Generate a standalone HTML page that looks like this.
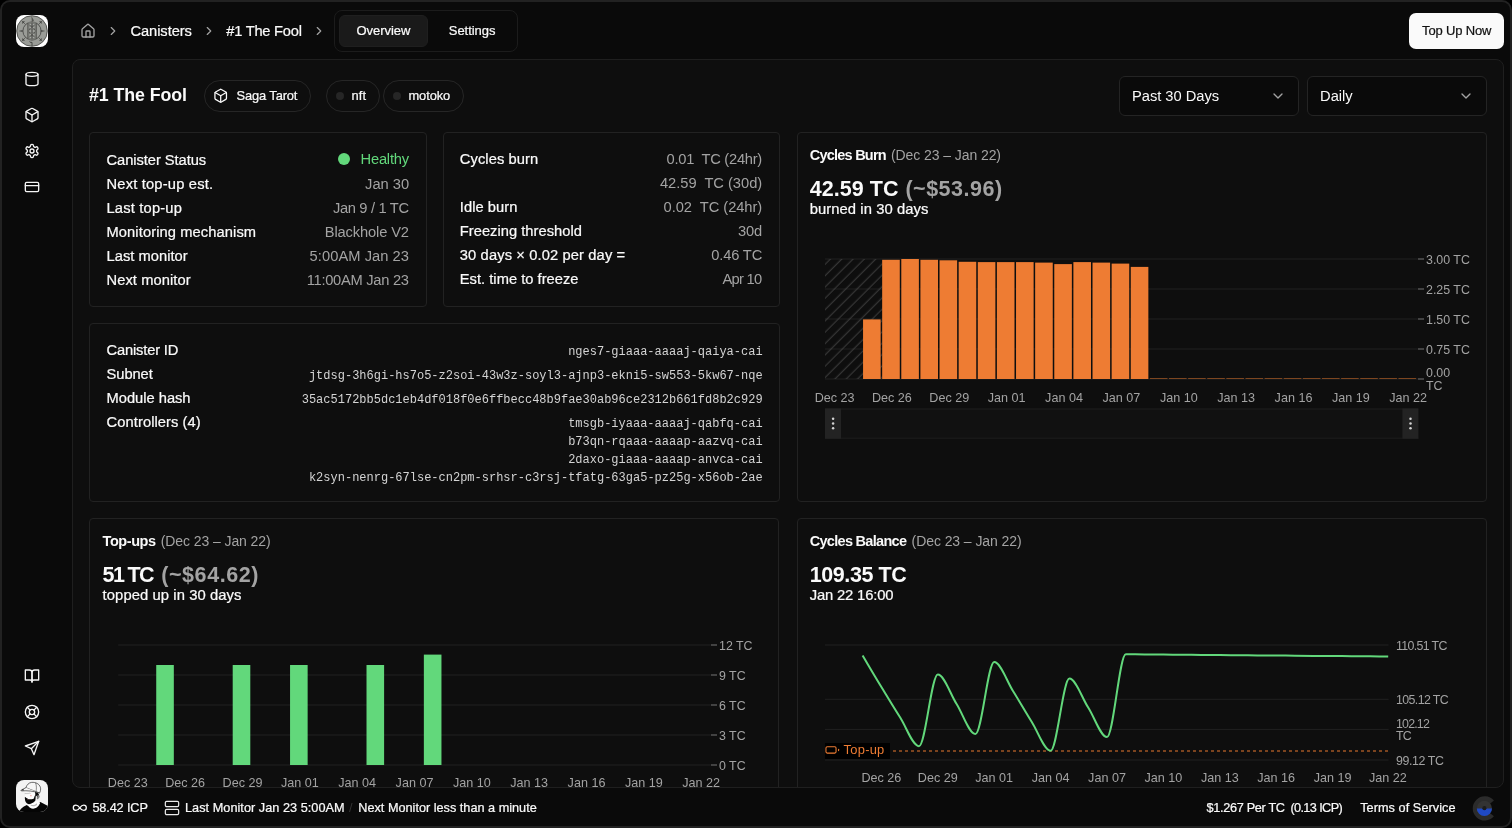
<!DOCTYPE html>
<html><head><meta charset="utf-8"><title>#1 The Fool</title>
<style>
*{box-sizing:border-box;margin:0;padding:0}
html,body{width:1512px;height:828px;overflow:hidden;background:#000}
body{font-family:"Liberation Sans",sans-serif;color:#fafafa;font-size:14.6px;-webkit-font-smoothing:antialiased}
#win{position:absolute;left:0;top:0;width:1512px;height:828px;background:#222;border-radius:10px}
#app{position:absolute;left:2px;top:2px;width:1508px;height:824px;background:#0a0a0a;border-radius:8px;overflow:hidden}
/* everything inside #page is positioned in full-window coordinates */
#page{position:absolute;left:-2px;top:-2px;width:1512px;height:828px;will-change:transform}
.abs{position:absolute}
.ic{position:absolute;display:block}
.t{position:absolute;white-space:pre;line-height:1}
.mut{color:#a3a3a3}
.panel{position:absolute;left:72px;top:59px;width:1432px;height:729px;border:1px solid #1f1f1f;border-radius:8px;background:#0e0e0e;overflow:hidden}
.pin{position:absolute;left:-73px;top:-60px;width:1512px;height:828px}
.card{position:absolute;border:1px solid #222;border-radius:4px;background:#0e0e0e}
.pill{position:absolute;height:32px;top:80px;border:1px solid #262626;border-radius:16px}
.row{position:absolute;left:0;right:0;height:24px}
.mono{font-family:"Liberation Mono",monospace;font-size:12px;color:#d4d4d4}
</style></head><body>
<div id="win"><div id="app"><div id="page">
<svg class="ic" style="left:16px;top:15px" width="32" height="32" viewBox="0 0 32 32">
<defs><clipPath id="lgc"><rect width="32" height="32" rx="8"/></clipPath></defs>
<rect width="32" height="32" rx="8" fill="#fefefe"/>
<g clip-path="url(#lgc)">
<circle cx="16" cy="16" r="15.3" fill="#9a9c97" stroke="#4a4b48" stroke-width=".9"/>
<circle cx="16" cy="16" r="9.1" fill="none" stroke="#4a4b48" stroke-width=".9"/>
<path d="M22.51 9.49L26.32 5.68M9.49 9.49L5.68 5.68M9.49 22.51L5.68 26.32M22.51 22.51L26.32 26.32" stroke="#4a4b48" stroke-width=".7" fill="none"/>
<path d="M25.62 6.38L22.99 6.37L25.63 9.01ZM6.38 6.38L6.37 9.01L9.01 6.37ZM6.38 25.62L9.01 25.63L6.37 22.99ZM25.62 25.62L25.63 22.99L22.99 25.63Z" fill="#3d3e3b"/>
<path d="M15.300 .8L18 5.400L15.900 7Z" fill="#565753"/>
<path d="M16 31.200V27.400h-1.700l-.6-1" stroke="#3d3e3b" stroke-width=".9" fill="none"/>
<path d="M2.500 16l4.200-1v2zM29.500 16l-4.700-1.100v2.200z" fill="#4a4b48"/>
<rect x="11.700" y="7.300" width="8.700" height="17.300" rx=".8" fill="#7b7d78"/>
<path d="M12.600 9l6.800 6.200M19.400 9l-6.800 6.200M12.600 16.800l6.800 6.200M19.400 16.800l-6.800 6.200M16 7.500v17" stroke="#50514e" stroke-width=".9" fill="none"/>
<path d="M11.700 8v16M20.400 8v16" stroke="#4a4b48" stroke-width=".7"/>
<g fill="#a9aba6"><rect x="13.50" y="8.90" width="1.6" height="1.4" rx=".3"/><rect x="16.90" y="8.90" width="1.6" height="1.4" rx=".3"/><ellipse cx="14.30" cy="12.60" rx="1.25" ry=".65" transform="rotate(40 14.30 12.60)"/><ellipse cx="17.70" cy="12.60" rx="1.25" ry=".65" transform="rotate(-40 17.70 12.60)"/><rect x="13.45" y="15.15" width="1.7" height="1.7" rx=".3"/><rect x="16.85" y="15.15" width="1.7" height="1.7" rx=".3"/><ellipse cx="14.30" cy="19.40" rx="1.25" ry=".65" transform="rotate(-40 14.30 19.40)"/><ellipse cx="17.70" cy="19.40" rx="1.25" ry=".65" transform="rotate(40 17.70 19.40)"/><rect x="13.50" y="21.70" width="1.6" height="1.4" rx=".3"/><rect x="16.90" y="21.70" width="1.6" height="1.4" rx=".3"/></g>
</g></svg>
<svg class="ic" style="left:24px;top:71px" width="16" height="16" viewBox="0 0 24 24" fill="none" stroke="#f5f5f5" stroke-width="2" stroke-linecap="round" stroke-linejoin="round"><ellipse cx="12" cy="5" rx="9" ry="3"/><path d="M3 5v14a9 3 0 0 0 18 0V5"/></svg>
<svg class="ic" style="left:24px;top:107px" width="16" height="16" viewBox="0 0 24 24" fill="none" stroke="#f5f5f5" stroke-width="2" stroke-linecap="round" stroke-linejoin="round"><path d="M21 8a2 2 0 0 0-1-1.73l-7-4a2 2 0 0 0-2 0l-7 4A2 2 0 0 0 3 8v8a2 2 0 0 0 1 1.73l7 4a2 2 0 0 0 2 0l7-4A2 2 0 0 0 21 16Z"/><path d="m3.3 7 8.7 5 8.7-5"/><path d="M12 22V12"/></svg>
<svg class="ic" style="left:24px;top:143px" width="16" height="16" viewBox="0 0 24 24" fill="none" stroke="#f5f5f5" stroke-width="2" stroke-linecap="round" stroke-linejoin="round"><path d="M12.22 2h-.44a2 2 0 0 0-2 2v.18a2 2 0 0 1-1 1.73l-.43.25a2 2 0 0 1-2 0l-.15-.08a2 2 0 0 0-2.73.73l-.22.38a2 2 0 0 0 .73 2.73l.15.1a2 2 0 0 1 1 1.72v.51a2 2 0 0 1-1 1.74l-.15.09a2 2 0 0 0-.73 2.73l.22.38a2 2 0 0 0 2.73.73l.15-.08a2 2 0 0 1 2 0l.43.25a2 2 0 0 1 1 1.73V20a2 2 0 0 0 2 2h.44a2 2 0 0 0 2-2v-.18a2 2 0 0 1 1-1.73l.43-.25a2 2 0 0 1 2 0l.15.08a2 2 0 0 0 2.73-.73l.22-.39a2 2 0 0 0-.73-2.73l-.15-.08a2 2 0 0 1-1-1.74v-.5a2 2 0 0 1 1-1.74l.15-.09a2 2 0 0 0 .73-2.73l-.22-.38a2 2 0 0 0-2.73-.73l-.15.08a2 2 0 0 1-2 0l-.43-.25a2 2 0 0 1-1-1.73V4a2 2 0 0 0-2-2z"/><circle cx="12" cy="12" r="3"/></svg>
<svg class="ic" style="left:24px;top:179px" width="16" height="16" viewBox="0 0 24 24" fill="none" stroke="#f5f5f5" stroke-width="2" stroke-linecap="round" stroke-linejoin="round"><rect width="20" height="14" x="2" y="5" rx="2"/><line x1="2" x2="22" y1="10" y2="10"/></svg>
<svg class="ic" style="left:24px;top:667.5px" width="16" height="16" viewBox="0 0 24 24" fill="none" stroke="#f5f5f5" stroke-width="2" stroke-linecap="round" stroke-linejoin="round"><path d="M2 3h6a4 4 0 0 1 4 4v14a3 3 0 0 0-3-3H2z"/><path d="M22 3h-6a4 4 0 0 0-4 4v14a3 3 0 0 1 3-3h7z"/></svg>
<svg class="ic" style="left:24px;top:704px" width="16" height="16" viewBox="0 0 24 24" fill="none" stroke="#f5f5f5" stroke-width="2" stroke-linecap="round" stroke-linejoin="round"><circle cx="12" cy="12" r="10"/><path d="m4.93 4.93 4.24 4.24"/><path d="m14.83 9.17 4.24-4.24"/><path d="m14.83 14.83 4.24 4.24"/><path d="m9.17 14.83-4.24 4.24"/><circle cx="12" cy="12" r="4"/></svg>
<svg class="ic" style="left:24px;top:740px" width="16" height="16" viewBox="0 0 24 24" fill="none" stroke="#f5f5f5" stroke-width="2" stroke-linecap="round" stroke-linejoin="round"><path d="m22 2-7 20-4-9-9-4Z"/><path d="M22 2 11 13"/></svg>
<svg class="ic" style="left:16px;top:780px" width="32" height="32" viewBox="0 0 32 32">
<defs><clipPath id="avc"><rect width="32" height="32" rx="8"/></clipPath></defs>
<g clip-path="url(#avc)"><rect width="32" height="32" fill="#f3f3f3"/>
<path d="M3.300 32C3.800 29.300 6.500 27 10.800 25L14 27.500L24.400 22L32.500 26.200V32Z" fill="#050505"/>
<path d="M12.600 25.200C13.200 29.300 20.500 31 24.100 23.300L22.300 20.500L13.500 23.500Z" fill="#fdfdfd"/>
<path d="M14.500 24.500c2 1 4.500.7 6.300-1.300l.3 1.500c-2 1.800-4.600 2-6.400.9z" fill="#b9b9b9"/>
<path d="M9.600 12.500C9 15 8.800 19.500 10 22.300c2 2.200 6.500 1.700 9.500-1.800l.800-8z" fill="#fcfcfc"/>
<path d="M8.900 16.800C8.700 19.300 9.200 21.600 10.100 22.600C11.500 24.300 13.200 24.500 14.800 23.800C17 23 18.900 21.700 19.400 20.600L19.900 14.600C18.700 15.600 18.200 17.200 18 18.400C16 19.300 13.500 19.500 12.300 19C11 18.400 9.800 17.600 8.900 16.800Z" fill="#060606"/>
<path d="M10.700 19.100c.7.600 1.700.7 2.500.3-.5.900-1.900 1-2.500-.3z" fill="#e9a3a3"/>
<ellipse cx="14.900" cy="15.700" rx="1" ry=".6" fill="#f3b3b0"/>
<path d="M19.100 12.100c1.600.2 3.300 1 3.900 2.600l-1.400 2.700c-.6-1.400-1.400-1.900-2.200-1.900z" fill="#0a0a0a"/>
<path d="M21.300 15.200c1.400-.6 2.200.4 1.900 1.600-.3 1.300-1 2-1.900 2.200z" fill="#9a9a9a" stroke="#222" stroke-width=".4"/>
<path d="M9.900 7.700C10.800 4.800 12.800 2.700 15.600 2.400C19.700 2 23.300 3.900 24.400 7.300C25 9.300 24.300 11.800 23.500 13L9.900 7.700Z" fill="#f6f6f6" stroke="#111" stroke-width=".6" stroke-linejoin="round"/>
<path d="M9.900 7.700L5.300 10C4.800 10.300 5 10.900 5.700 10.900C11 10.400 17 11 23.500 13" fill="#f6f6f6" stroke="#111" stroke-width=".6" stroke-linejoin="round"/>
<path d="M5.100 10.300l2.300-1.200.4 1.500z" fill="#111"/>
<path d="M19.600 2.900c1 2.700 1 5.800.4 8.800" fill="none" stroke="#222" stroke-width=".5"/>
<path d="M8.700 13.600h3.600M12.300 13.600c.8-.5 1.600-.5 2.300 0" fill="none" stroke="#777" stroke-width=".4"/>
</g></svg>
<svg class="ic" style="left:80px;top:23px" width="16" height="16" viewBox="0 0 24 24" fill="none" stroke="#a3a3a3" stroke-width="2" stroke-linecap="round" stroke-linejoin="round"><path d="M15 21v-8a1 1 0 0 0-1-1h-4a1 1 0 0 0-1 1v8"/><path d="M3 10a2 2 0 0 1 .709-1.528l7-5.999a2 2 0 0 1 2.582 0l7 5.999A2 2 0 0 1 21 10v9a2 2 0 0 1-2 2H5a2 2 0 0 1-2-2z"/></svg>
<svg class="ic" style="left:106px;top:24px" width="14" height="14" viewBox="0 0 24 24" fill="none" stroke="#a3a3a3" stroke-width="2" stroke-linecap="round" stroke-linejoin="round"><path d="m9 18 6-6-6-6"/></svg>
<svg class="ic" style="left:202px;top:24px" width="14" height="14" viewBox="0 0 24 24" fill="none" stroke="#a3a3a3" stroke-width="2" stroke-linecap="round" stroke-linejoin="round"><path d="m9 18 6-6-6-6"/></svg>
<svg class="ic" style="left:312px;top:24px" width="14" height="14" viewBox="0 0 24 24" fill="none" stroke="#a3a3a3" stroke-width="2" stroke-linecap="round" stroke-linejoin="round"><path d="m9 18 6-6-6-6"/></svg>
<div class="t " style="left:130.40px;top:24.00px;font-size:14.7px;letter-spacing:-0.062px;-webkit-text-stroke:.22px currentColor;">Canisters</div>
<div class="t " style="left:226.30px;top:24.00px;font-size:14.7px;letter-spacing:-0.247px;-webkit-text-stroke:.22px currentColor;">#1 The Fool</div>
<div class="abs" style="left:334px;top:10px;width:184px;height:42px;border:1px solid #1c1c1c;border-radius:8px"></div>
<div class="abs" style="left:339px;top:15px;width:88.5px;height:32px;background:#1a1a1a;border:1px solid #1f1f1f;border-radius:6px"></div>
<div class="t " style="left:356.50px;top:24.00px;font-size:13px;letter-spacing:-0.059px;-webkit-text-stroke:.22px currentColor;">Overview</div>
<div class="t " style="left:448.80px;top:24.00px;font-size:13px;letter-spacing:-0.053px;-webkit-text-stroke:.22px currentColor;">Settings</div>
<div class="abs" style="left:1409px;top:13px;width:95px;height:36px;background:#fafafa;border-radius:7px"></div>
<div class="t " style="left:1422.10px;top:24.00px;font-size:13px;color:#111;letter-spacing:-0.161px;-webkit-text-stroke:.22px currentColor;">Top Up Now</div>
<svg class="ic" style="left:72.1px;top:799.8px" width="15.6" height="15.6" viewBox="0 0 24 24" fill="none" stroke="#fafafa" stroke-width="2" stroke-linecap="round" stroke-linejoin="round"><path d="M12 12c-2-2.67-4-4-6-4a4 4 0 1 0 0 8c2 0 4-1.33 6-4Zm0 0c2 2.67 4 4 6 4a4 4 0 0 0 0-8c-2 0-4 1.33-6 4Z"/></svg>
<div class="t " style="left:92.40px;top:802.00px;font-size:12.7px;letter-spacing:-0.122px;-webkit-text-stroke:.22px currentColor;">58.42 ICP</div>
<svg class="ic" style="left:164.4px;top:799.9px" width="16" height="16" viewBox="0 0 24 24" fill="none" stroke="#ededed" stroke-width="1.8" stroke-linecap="round" stroke-linejoin="round"><rect width="20" height="8" x="2" y="2" rx="2" ry="2"/><rect width="20" height="8" x="2" y="14" rx="2" ry="2"/></svg>
<div class="t " style="left:185.00px;top:802.00px;font-size:12.7px;letter-spacing:0.038px;-webkit-text-stroke:.22px currentColor;">Last Monitor Jan 23 5:00AM</div>
<div class="t " style="left:349.00px;top:802.00px;font-size:12.7px;color:#333;">/</div>
<div class="t " style="left:358.30px;top:802.00px;font-size:12.7px;-webkit-text-stroke:.22px currentColor;">Next Monitor less than a minute</div>
<div class="t " style="left:1206.50px;top:802.00px;font-size:12.7px;letter-spacing:-0.313px;-webkit-text-stroke:.22px currentColor;">$1.267 Per TC</div>
<div class="t " style="left:1290.40px;top:802.00px;font-size:12.7px;letter-spacing:-0.608px;-webkit-text-stroke:.22px currentColor;">(0.13 ICP)</div>
<div class="t " style="left:1360.20px;top:802.00px;font-size:12.7px;letter-spacing:0.056px;-webkit-text-stroke:.22px currentColor;">Terms of Service</div>
<svg class="ic" style="left:1469.9px;top:793.5px" width="28.800" height="28.800" viewBox="0 0 25 25">
<path d="M20.800 5.600A10.500 10.500 0 1 0 20.800 19.400L17 16.300A5.600 5.600 0 1 1 17 8.700Z" fill="#2b2b2b"/>
<circle cx="12.500" cy="12.500" r="6.600" fill="#333"/>
<path d="M5.900 12.500a6.600 6.600 0 0 0 13.200 0Z" fill="#1f49c4"/>
<circle cx="12.500" cy="12.300" r="1.800" fill="#1c1c1c"/>
</svg>
<div class="panel"><div class="pin">
<div class="t " style="left:88.90px;top:87.00px;font-size:17.8px;font-weight:700;letter-spacing:-0.070px;">#1 The Fool</div>
<div class="pill" style="left:204px;width:107px"></div>
<svg class="ic" style="left:212.8px;top:87.9px" width="15.4" height="15.4" viewBox="0 0 24 24" fill="none" stroke="#fafafa" stroke-width="2" stroke-linecap="round" stroke-linejoin="round"><path d="M21 8a2 2 0 0 0-1-1.73l-7-4a2 2 0 0 0-2 0l-7 4A2 2 0 0 0 3 8v8a2 2 0 0 0 1 1.73l7 4a2 2 0 0 0 2 0l7-4A2 2 0 0 0 21 16Z"/><path d="m3.3 7 8.7 5 8.7-5"/><path d="M12 22V12"/></svg>
<div class="t " style="left:236.60px;top:90.00px;font-size:12.9px;letter-spacing:-0.139px;-webkit-text-stroke:.22px currentColor;">Saga Tarot</div>
<div class="pill" style="left:326px;width:54px"></div>
<div class="abs" style="left:335.5px;top:92px;width:8px;height:8px;border-radius:4px;background:#262626"></div>
<div class="t " style="left:351.60px;top:90.00px;font-size:12.9px;letter-spacing:0.028px;-webkit-text-stroke:.22px currentColor;">nft</div>
<div class="pill" style="left:383px;width:81px"></div>
<div class="abs" style="left:392.5px;top:92px;width:8px;height:8px;border-radius:4px;background:#262626"></div>
<div class="t " style="left:408.50px;top:90.00px;font-size:12.9px;letter-spacing:-0.120px;-webkit-text-stroke:.22px currentColor;">motoko</div>
<div class="abs" style="left:1119px;top:76px;width:180px;height:40px;border:1px solid #242424;border-radius:6px;background:#0a0a0a"></div>
<div class="t " style="left:1132.10px;top:89.00px;font-size:14.7px;letter-spacing:-0.038px;">Past 30 Days</div>
<svg class="ic" style="left:1270px;top:88px" width="16" height="16" viewBox="0 0 24 24" fill="none" stroke="#a3a3a3" stroke-width="2" stroke-linecap="round" stroke-linejoin="round"><path d="m6 9 6 6 6-6"/></svg>
<div class="abs" style="left:1307px;top:76px;width:180px;height:40px;border:1px solid #242424;border-radius:6px;background:#0a0a0a"></div>
<div class="t " style="left:1320.10px;top:89.00px;font-size:14.7px;letter-spacing:-0.020px;">Daily</div>
<svg class="ic" style="left:1458px;top:88px" width="16" height="16" viewBox="0 0 24 24" fill="none" stroke="#a3a3a3" stroke-width="2" stroke-linecap="round" stroke-linejoin="round"><path d="m6 9 6 6 6-6"/></svg>
<div class="card" style="left:89px;top:132px;width:338px;height:175px"></div>
<div class="t " style="left:106.50px;top:153.00px;font-size:14.7px;letter-spacing:-0.056px;-webkit-text-stroke:.22px currentColor;">Canister Status</div>
<div class="t " style="left:360.60px;top:152.00px;font-size:14.7px;color:#62d87b;letter-spacing:-0.225px;">Healthy</div>
<div class="abs" style="left:337.5px;top:153px;width:12px;height:12px;border-radius:6px;background:#62d87b"></div>
<div class="t " style="left:106.50px;top:177.00px;font-size:14.7px;letter-spacing:0.189px;-webkit-text-stroke:.22px currentColor;">Next top-up est.</div>
<div class="t " style="left:365.10px;top:177.00px;font-size:14.7px;color:#a3a3a3;letter-spacing:-0.026px;">Jan 30</div>
<div class="t " style="left:106.50px;top:201.00px;font-size:14.7px;letter-spacing:0.186px;-webkit-text-stroke:.22px currentColor;">Last top-up</div>
<div class="t " style="left:332.90px;top:201.00px;font-size:14.7px;color:#a3a3a3;letter-spacing:-0.328px;">Jan 9 / 1 TC</div>
<div class="t " style="left:106.50px;top:225.00px;font-size:14.7px;letter-spacing:0.096px;-webkit-text-stroke:.22px currentColor;">Monitoring mechanism</div>
<div class="t " style="left:324.80px;top:225.00px;font-size:14.7px;color:#a3a3a3;letter-spacing:-0.137px;">Blackhole V2</div>
<div class="t " style="left:106.50px;top:249.00px;font-size:14.7px;letter-spacing:0.029px;-webkit-text-stroke:.22px currentColor;">Last monitor</div>
<div class="t " style="left:309.60px;top:249.00px;font-size:14.7px;color:#a3a3a3;letter-spacing:0.051px;">5:00AM Jan 23</div>
<div class="t " style="left:106.50px;top:273.00px;font-size:14.7px;letter-spacing:0.071px;-webkit-text-stroke:.22px currentColor;">Next monitor</div>
<div class="t " style="left:306.70px;top:273.00px;font-size:14.7px;color:#a3a3a3;letter-spacing:-0.275px;">11:00AM Jan 23</div>
<div class="card" style="left:443px;top:132px;width:337px;height:175px"></div>
<div class="t " style="left:459.80px;top:152.00px;font-size:14.7px;letter-spacing:0.078px;-webkit-text-stroke:.22px currentColor;">Cycles burn</div>
<div class="t " style="left:666.60px;top:152.00px;font-size:14.7px;color:#a3a3a3;letter-spacing:-0.264px;">0.01  TC (24hr)</div>
<div class="t " style="left:659.90px;top:176.00px;font-size:14.7px;color:#a3a3a3;letter-spacing:-0.020px;">42.59  TC (30d)</div>
<div class="t " style="left:459.80px;top:200.00px;font-size:14.7px;letter-spacing:0.048px;-webkit-text-stroke:.22px currentColor;">Idle burn</div>
<div class="t " style="left:663.60px;top:200.00px;font-size:14.7px;color:#a3a3a3;letter-spacing:-0.050px;">0.02  TC (24hr)</div>
<div class="t " style="left:459.80px;top:224.00px;font-size:14.7px;letter-spacing:0.027px;-webkit-text-stroke:.22px currentColor;">Freezing threshold</div>
<div class="t " style="left:738.00px;top:224.00px;font-size:14.7px;color:#a3a3a3;letter-spacing:-0.110px;">30d</div>
<div class="t " style="left:459.80px;top:248.00px;font-size:14.7px;letter-spacing:0.124px;-webkit-text-stroke:.22px currentColor;">30 days × 0.02 per day =</div>
<div class="t " style="left:711.20px;top:248.00px;font-size:14.7px;color:#a3a3a3;letter-spacing:-0.154px;">0.46 TC</div>
<div class="t " style="left:459.80px;top:272.00px;font-size:14.7px;letter-spacing:0.018px;-webkit-text-stroke:.22px currentColor;">Est. time to freeze</div>
<div class="t " style="left:722.40px;top:272.00px;font-size:14.7px;color:#a3a3a3;letter-spacing:-0.681px;">Apr 10</div>
<div class="card" style="left:89px;top:323px;width:691px;height:179px"></div>
<div class="t " style="left:106.60px;top:343.00px;font-size:14.7px;letter-spacing:-0.181px;-webkit-text-stroke:.22px currentColor;">Canister ID</div>
<div class="t " style="left:106.60px;top:367.00px;font-size:14.7px;letter-spacing:-0.077px;-webkit-text-stroke:.22px currentColor;">Subnet</div>
<div class="t " style="left:106.60px;top:391.00px;font-size:14.7px;letter-spacing:-0.017px;-webkit-text-stroke:.22px currentColor;">Module hash</div>
<div class="t " style="left:106.60px;top:415.00px;font-size:14.7px;letter-spacing:0.077px;-webkit-text-stroke:.22px currentColor;">Controllers (4)</div>
<div class="t mono" style="left:568.16px;top:346.00px;font-size:12px;color:#d4d4d4;">nges7-giaaa-aaaaj-qaiya-cai</div>
<div class="t mono" style="left:308.93px;top:370.00px;font-size:12px;color:#d4d4d4;">jtdsg-3h6gi-hs7o5-z2soi-43w3z-soyl3-ajnp3-ekni5-sw553-5kw67-nqe</div>
<div class="t mono" style="left:301.73px;top:394.00px;font-size:12px;color:#d4d4d4;">35ac5172bb5dc1eb4df018f0e6ffbecc48b9fae30ab96ce2312b661fd8b2c929</div>
<div class="t mono" style="left:568.16px;top:418.00px;font-size:12px;color:#d4d4d4;">tmsgb-iyaaa-aaaaj-qabfq-cai</div>
<div class="t mono" style="left:568.16px;top:436.00px;font-size:12px;color:#d4d4d4;">b73qn-rqaaa-aaaap-aazvq-cai</div>
<div class="t mono" style="left:568.16px;top:454.00px;font-size:12px;color:#d4d4d4;">2daxo-giaaa-aaaap-anvca-cai</div>
<div class="t mono" style="left:308.93px;top:472.00px;font-size:12px;color:#d4d4d4;">k2syn-nenrg-67lse-cn2pm-srhsr-c3rsj-tfatg-63ga5-pz25g-x56ob-2ae</div>
<div class="card" style="left:797px;top:132px;width:690px;height:370px"></div>
<div class="t " style="left:809.70px;top:148.00px;font-size:14.5px;font-weight:700;letter-spacing:-0.761px;">Cycles Burn</div>
<div class="t " style="left:891.00px;top:148.00px;font-size:14px;color:#a3a3a3;letter-spacing:-0.080px;">(Dec 23 – Jan 22)</div>
<div class="t " style="left:809.70px;top:179.00px;font-size:21.5px;font-weight:700;letter-spacing:0.067px;">42.59 TC</div>
<div class="t " style="left:905.40px;top:179.00px;font-size:21.5px;font-weight:700;color:#a3a3a3;letter-spacing:0.520px;">(~$53.96)</div>
<div class="t " style="left:809.70px;top:202.00px;font-size:14.8px;letter-spacing:0.065px;-webkit-text-stroke:.22px currentColor;">burned in 30 days</div>
<svg class="ic" style="left:0;top:0" width="1512" height="900" viewBox="0 0 1512 900" font-family="Liberation Sans, sans-serif"><defs><pattern id="hatch" width="8" height="8" patternUnits="userSpaceOnUse" patternTransform="rotate(-45 0 0)"><line x1="0" y1="2.3" x2="8" y2="2.3" stroke="#4d4d4d" stroke-width=".75"/></pattern></defs><line x1="825" x2="1417.8" y1="259" y2="259" stroke="#212121"/><line x1="1418.0" x2="1424.0" y1="259" y2="259" stroke="#777"/><text x="1426.0" y="263.5" fill="#a3a3a3" font-size="12.4">3.00 TC</text><line x1="825" x2="1417.8" y1="289" y2="289" stroke="#212121"/><line x1="1418.0" x2="1424.0" y1="289" y2="289" stroke="#777"/><text x="1426.0" y="293.5" fill="#a3a3a3" font-size="12.4">2.25 TC</text><line x1="825" x2="1417.8" y1="319" y2="319" stroke="#212121"/><line x1="1418.0" x2="1424.0" y1="319" y2="319" stroke="#777"/><text x="1426.0" y="323.5" fill="#a3a3a3" font-size="12.4">1.50 TC</text><line x1="825" x2="1417.8" y1="349" y2="349" stroke="#212121"/><line x1="1418.0" x2="1424.0" y1="349" y2="349" stroke="#777"/><text x="1426.0" y="353.5" fill="#a3a3a3" font-size="12.4">0.75 TC</text><line x1="825" x2="1417.8" y1="379" y2="379" stroke="#212121"/><line x1="1418.0" x2="1424.0" y1="379" y2="379" stroke="#777"/><text x="1426.0" y="377.4" fill="#a3a3a3" font-size="12.4">0.00</text><text x="1426.0" y="389.7" fill="#a3a3a3" font-size="12.4">TC</text><rect x="825" y="259" width="57.4" height="120" fill="url(#hatch)"/><rect x="863.05" y="319.4" width="17.6" height="59.6" fill="#ee7c33"/><rect x="882.17" y="259.8" width="17.6" height="119.2" fill="#ee7c33"/><rect x="901.29" y="259.0" width="17.6" height="120.0" fill="#ee7c33"/><rect x="920.41" y="259.8" width="17.6" height="119.2" fill="#ee7c33"/><rect x="939.54" y="260.3" width="17.6" height="118.7" fill="#ee7c33"/><rect x="958.66" y="261.8" width="17.6" height="117.2" fill="#ee7c33"/><rect x="977.78" y="262.1" width="17.6" height="116.9" fill="#ee7c33"/><rect x="996.90" y="262.1" width="17.6" height="116.9" fill="#ee7c33"/><rect x="1016.03" y="262.1" width="17.6" height="116.9" fill="#ee7c33"/><rect x="1035.15" y="262.6" width="17.6" height="116.4" fill="#ee7c33"/><rect x="1054.27" y="264.1" width="17.6" height="114.9" fill="#ee7c33"/><rect x="1073.39" y="262.1" width="17.6" height="116.9" fill="#ee7c33"/><rect x="1092.52" y="262.6" width="17.6" height="116.4" fill="#ee7c33"/><rect x="1111.64" y="263.6" width="17.6" height="115.4" fill="#ee7c33"/><rect x="1130.76" y="266.9" width="17.6" height="112.1" fill="#ee7c33"/><rect x="1149.88" y="378.1" width="17.6" height=".9" fill="#8a4c22"/><rect x="1169.01" y="378.1" width="17.6" height=".9" fill="#8a4c22"/><rect x="1188.13" y="378.1" width="17.6" height=".9" fill="#8a4c22"/><rect x="1207.25" y="378.1" width="17.6" height=".9" fill="#8a4c22"/><rect x="1226.37" y="378.1" width="17.6" height=".9" fill="#8a4c22"/><rect x="1245.50" y="378.1" width="17.6" height=".9" fill="#8a4c22"/><rect x="1264.62" y="378.1" width="17.6" height=".9" fill="#8a4c22"/><rect x="1283.74" y="378.1" width="17.6" height=".9" fill="#8a4c22"/><rect x="1302.86" y="378.1" width="17.6" height=".9" fill="#8a4c22"/><rect x="1321.99" y="378.1" width="17.6" height=".9" fill="#8a4c22"/><rect x="1341.11" y="378.1" width="17.6" height=".9" fill="#8a4c22"/><rect x="1360.23" y="378.1" width="17.6" height=".9" fill="#8a4c22"/><rect x="1379.35" y="378.1" width="17.6" height=".9" fill="#8a4c22"/><rect x="1398.48" y="378.1" width="17.6" height=".9" fill="#8a4c22"/><text x="834.6" y="401.7" text-anchor="middle" fill="#a3a3a3" font-size="12.6">Dec 23</text><text x="891.9" y="401.7" text-anchor="middle" fill="#a3a3a3" font-size="12.6">Dec 26</text><text x="949.3" y="401.7" text-anchor="middle" fill="#a3a3a3" font-size="12.6">Dec 29</text><text x="1006.7" y="401.7" text-anchor="middle" fill="#a3a3a3" font-size="12.6">Jan 01</text><text x="1064.0" y="401.7" text-anchor="middle" fill="#a3a3a3" font-size="12.6">Jan 04</text><text x="1121.4" y="401.7" text-anchor="middle" fill="#a3a3a3" font-size="12.6">Jan 07</text><text x="1178.8" y="401.7" text-anchor="middle" fill="#a3a3a3" font-size="12.6">Jan 10</text><text x="1236.1" y="401.7" text-anchor="middle" fill="#a3a3a3" font-size="12.6">Jan 13</text><text x="1293.5" y="401.7" text-anchor="middle" fill="#a3a3a3" font-size="12.6">Jan 16</text><text x="1350.9" y="401.7" text-anchor="middle" fill="#a3a3a3" font-size="12.6">Jan 19</text><text x="1408.2" y="401.7" text-anchor="middle" fill="#a3a3a3" font-size="12.6">Jan 22</text><rect x="825" y="408.5" width="593.4" height="30.2" fill="#111"/><path d="M825 409.0H1418.4M825 438.2H1418.4" stroke="#1e1e1e"/><rect x="825" y="408.5" width="16" height="30.2" fill="#232323"/><circle cx="833.1" cy="418.8" r="1.25" fill="#d4d4d4"/><circle cx="833.1" cy="423.5" r="1.25" fill="#d4d4d4"/><circle cx="833.1" cy="428.2" r="1.25" fill="#d4d4d4"/><rect x="1402.3999999999999" y="408.5" width="16" height="30.2" fill="#232323"/><circle cx="1410.4999999999998" cy="418.8" r="1.25" fill="#d4d4d4"/><circle cx="1410.4999999999998" cy="423.5" r="1.25" fill="#d4d4d4"/><circle cx="1410.4999999999998" cy="428.2" r="1.25" fill="#d4d4d4"/></svg>
<div class="card" style="left:89px;top:518px;width:690px;height:370px"></div>
<div class="t " style="left:102.60px;top:534.00px;font-size:14.5px;font-weight:700;letter-spacing:-0.433px;">Top-ups</div>
<div class="t " style="left:160.70px;top:534.00px;font-size:14px;color:#a3a3a3;letter-spacing:-0.080px;">(Dec 23 – Jan 22)</div>
<div class="t " style="left:102.60px;top:565.00px;font-size:21.5px;font-weight:700;letter-spacing:-1.661px;">51 TC</div>
<div class="t " style="left:161.20px;top:565.00px;font-size:21.5px;font-weight:700;color:#a3a3a3;letter-spacing:0.582px;">(~$64.62)</div>
<div class="t " style="left:102.60px;top:588.00px;font-size:14.8px;letter-spacing:0.078px;-webkit-text-stroke:.22px currentColor;">topped up in 30 days</div>
<svg class="ic" style="left:0;top:0" width="1512" height="900" viewBox="0 0 1512 900" font-family="Liberation Sans, sans-serif"><line x1="118.2" x2="710.8" y1="645" y2="645" stroke="#212121"/><line x1="711.0" x2="717.0" y1="645" y2="645" stroke="#777"/><text x="719.0" y="649.5" fill="#a3a3a3" font-size="12.4">12 TC</text><line x1="118.2" x2="710.8" y1="675" y2="675" stroke="#212121"/><line x1="711.0" x2="717.0" y1="675" y2="675" stroke="#777"/><text x="719.0" y="679.5" fill="#a3a3a3" font-size="12.4">9 TC</text><line x1="118.2" x2="710.8" y1="705" y2="705" stroke="#212121"/><line x1="711.0" x2="717.0" y1="705" y2="705" stroke="#777"/><text x="719.0" y="709.5" fill="#a3a3a3" font-size="12.4">6 TC</text><line x1="118.2" x2="710.8" y1="735" y2="735" stroke="#212121"/><line x1="711.0" x2="717.0" y1="735" y2="735" stroke="#777"/><text x="719.0" y="739.5" fill="#a3a3a3" font-size="12.4">3 TC</text><line x1="118.2" x2="710.8" y1="765" y2="765" stroke="#212121"/><line x1="711.0" x2="717.0" y1="765" y2="765" stroke="#777"/><text x="719.0" y="769.5" fill="#a3a3a3" font-size="12.4">0 TC</text><rect x="156.23" y="665.0" width="17.6" height="100.0" fill="#62d87b"/><rect x="232.70" y="665.0" width="17.6" height="100.0" fill="#62d87b"/><rect x="290.05" y="665.0" width="17.6" height="100.0" fill="#62d87b"/><rect x="366.51" y="665.0" width="17.6" height="100.0" fill="#62d87b"/><rect x="423.86" y="654.6" width="17.6" height="110.4" fill="#62d87b"/><text x="127.8" y="787.2" text-anchor="middle" fill="#a3a3a3" font-size="12.6">Dec 23</text><text x="185.1" y="787.2" text-anchor="middle" fill="#a3a3a3" font-size="12.6">Dec 26</text><text x="242.5" y="787.2" text-anchor="middle" fill="#a3a3a3" font-size="12.6">Dec 29</text><text x="299.8" y="787.2" text-anchor="middle" fill="#a3a3a3" font-size="12.6">Jan 01</text><text x="357.2" y="787.2" text-anchor="middle" fill="#a3a3a3" font-size="12.6">Jan 04</text><text x="414.5" y="787.2" text-anchor="middle" fill="#a3a3a3" font-size="12.6">Jan 07</text><text x="471.8" y="787.2" text-anchor="middle" fill="#a3a3a3" font-size="12.6">Jan 10</text><text x="529.2" y="787.2" text-anchor="middle" fill="#a3a3a3" font-size="12.6">Jan 13</text><text x="586.5" y="787.2" text-anchor="middle" fill="#a3a3a3" font-size="12.6">Jan 16</text><text x="643.9" y="787.2" text-anchor="middle" fill="#a3a3a3" font-size="12.6">Jan 19</text><text x="701.2" y="787.2" text-anchor="middle" fill="#a3a3a3" font-size="12.6">Jan 22</text></svg>
<div class="card" style="left:797px;top:518px;width:690px;height:370px"></div>
<div class="t " style="left:809.70px;top:534.00px;font-size:14.5px;font-weight:700;letter-spacing:-0.700px;">Cycles Balance</div>
<div class="t " style="left:911.60px;top:534.00px;font-size:14px;color:#a3a3a3;letter-spacing:-0.080px;">(Dec 23 – Jan 22)</div>
<div class="t " style="left:809.70px;top:565.00px;font-size:21.5px;font-weight:700;letter-spacing:-0.410px;">109.35 TC</div>
<div class="t " style="left:809.70px;top:588.00px;font-size:14.8px;letter-spacing:-0.163px;-webkit-text-stroke:.22px currentColor;">Jan 22 16:00</div>
<div class="t " style="left:1396.00px;top:640.00px;font-size:12.4px;color:#a3a3a3;letter-spacing:-0.669px;">110.51 TC</div>
<div class="t " style="left:1396.00px;top:694.00px;font-size:12.4px;color:#a3a3a3;letter-spacing:-0.609px;">105.12 TC</div>
<div class="t " style="left:1396.00px;top:718.00px;font-size:12.4px;color:#a3a3a3;letter-spacing:-0.826px;">102.12</div>
<div class="t " style="left:1396.00px;top:730.00px;font-size:12.4px;color:#a3a3a3;letter-spacing:-0.829px;">TC</div>
<div class="t " style="left:1396.00px;top:755.00px;font-size:12.4px;color:#a3a3a3;letter-spacing:-0.411px;">99.12 TC</div>
<svg class="ic" style="left:0;top:0" width="1512" height="900" viewBox="0 0 1512 900" font-family="Liberation Sans, sans-serif"><line x1="825" x2="1388.6" y1="645" y2="645" stroke="#212121"/><line x1="825" x2="1388.6" y1="699.3" y2="699.3" stroke="#212121"/><line x1="825" x2="1388.6" y1="729.4" y2="729.4" stroke="#212121"/><line x1="825" x2="1388.6" y1="760" y2="760" stroke="#212121"/><text x="881.4" y="782.3" text-anchor="middle" fill="#a3a3a3" font-size="12.6">Dec 26</text><text x="937.8" y="782.3" text-anchor="middle" fill="#a3a3a3" font-size="12.6">Dec 29</text><text x="994.2" y="782.3" text-anchor="middle" fill="#a3a3a3" font-size="12.6">Jan 01</text><text x="1050.6" y="782.3" text-anchor="middle" fill="#a3a3a3" font-size="12.6">Jan 04</text><text x="1107.0" y="782.3" text-anchor="middle" fill="#a3a3a3" font-size="12.6">Jan 07</text><text x="1163.4" y="782.3" text-anchor="middle" fill="#a3a3a3" font-size="12.6">Jan 10</text><text x="1219.8" y="782.3" text-anchor="middle" fill="#a3a3a3" font-size="12.6">Jan 13</text><text x="1276.2" y="782.3" text-anchor="middle" fill="#a3a3a3" font-size="12.6">Jan 16</text><text x="1332.6" y="782.3" text-anchor="middle" fill="#a3a3a3" font-size="12.6">Jan 19</text><text x="1387.8" y="782.3" text-anchor="middle" fill="#a3a3a3" font-size="12.6">Jan 22</text><line x1="893" x2="1388.6" y1="751" y2="751" stroke="#e8792f" stroke-width="1.2" stroke-dasharray="3 3"/><path d="M862.6,655.5C868.9,666.1,875.1,676.7,881.4,687.0C887.7,697.3,893.9,707.6,900.2,717.5C906.5,727.4,912.7,746.2,919.0,746.2C925.3,746.2,931.5,674.5,937.8,674.5C944.1,674.5,950.3,694.1,956.6,704.0C962.9,713.9,969.1,734.0,975.4,734.0C981.7,734.0,987.9,662.1,994.2,662.1C1000.5,662.1,1006.7,681.0,1013.0,691.0C1019.3,701.0,1025.5,712.0,1031.8,722.0C1038.1,732.0,1044.3,750.7,1050.6,750.7C1056.9,750.7,1063.1,678.6,1069.4,678.6C1075.7,678.6,1081.9,697.8,1088.2,707.5C1094.5,717.2,1100.7,737.1,1107.0,737.1C1113.3,737.1,1119.5,654.3,1125.8,654.3C1132.1,654.3,1138.3,654.4,1144.6,654.4C1150.9,654.4,1157.1,654.5,1163.4,654.6C1169.7,654.6,1175.9,654.7,1182.2,654.7C1188.5,654.8,1194.7,654.8,1201.0,654.9C1207.3,654.9,1213.5,655.0,1219.8,655.0C1226.1,655.1,1232.3,655.2,1238.6,655.2C1244.9,655.3,1251.1,655.3,1257.4,655.4C1263.7,655.4,1269.9,655.5,1276.2,655.5C1282.5,655.6,1288.7,655.6,1295.0,655.7C1301.3,655.7,1307.5,655.8,1313.8,655.9C1320.1,655.9,1326.3,656.0,1332.6,656.0C1338.9,656.1,1345.1,656.1,1351.4,656.2C1357.7,656.2,1363.9,656.3,1370.2,656.3C1376.2,656.4,1382.2,656.4,1388.2,656.5" fill="none" stroke="#62d87b" stroke-width="2" stroke-linejoin="round"/><rect x="825" y="743" width="65" height="16" fill="#000"/><g transform="translate(824.7 742.4) scale(0.63)" fill="none" stroke="#ee7c33" stroke-width="1.7" stroke-linecap="round" stroke-linejoin="round"><rect width="16" height="10" x="2" y="7" rx="2" ry="2"/><line x1="22" x2="22" y1="11" y2="13"/></g><text x="843.6" y="754.2" fill="#ee7c33" font-size="12.9" letter-spacing=".25">Top-up</text></svg>
</div></div></div></body></html>
